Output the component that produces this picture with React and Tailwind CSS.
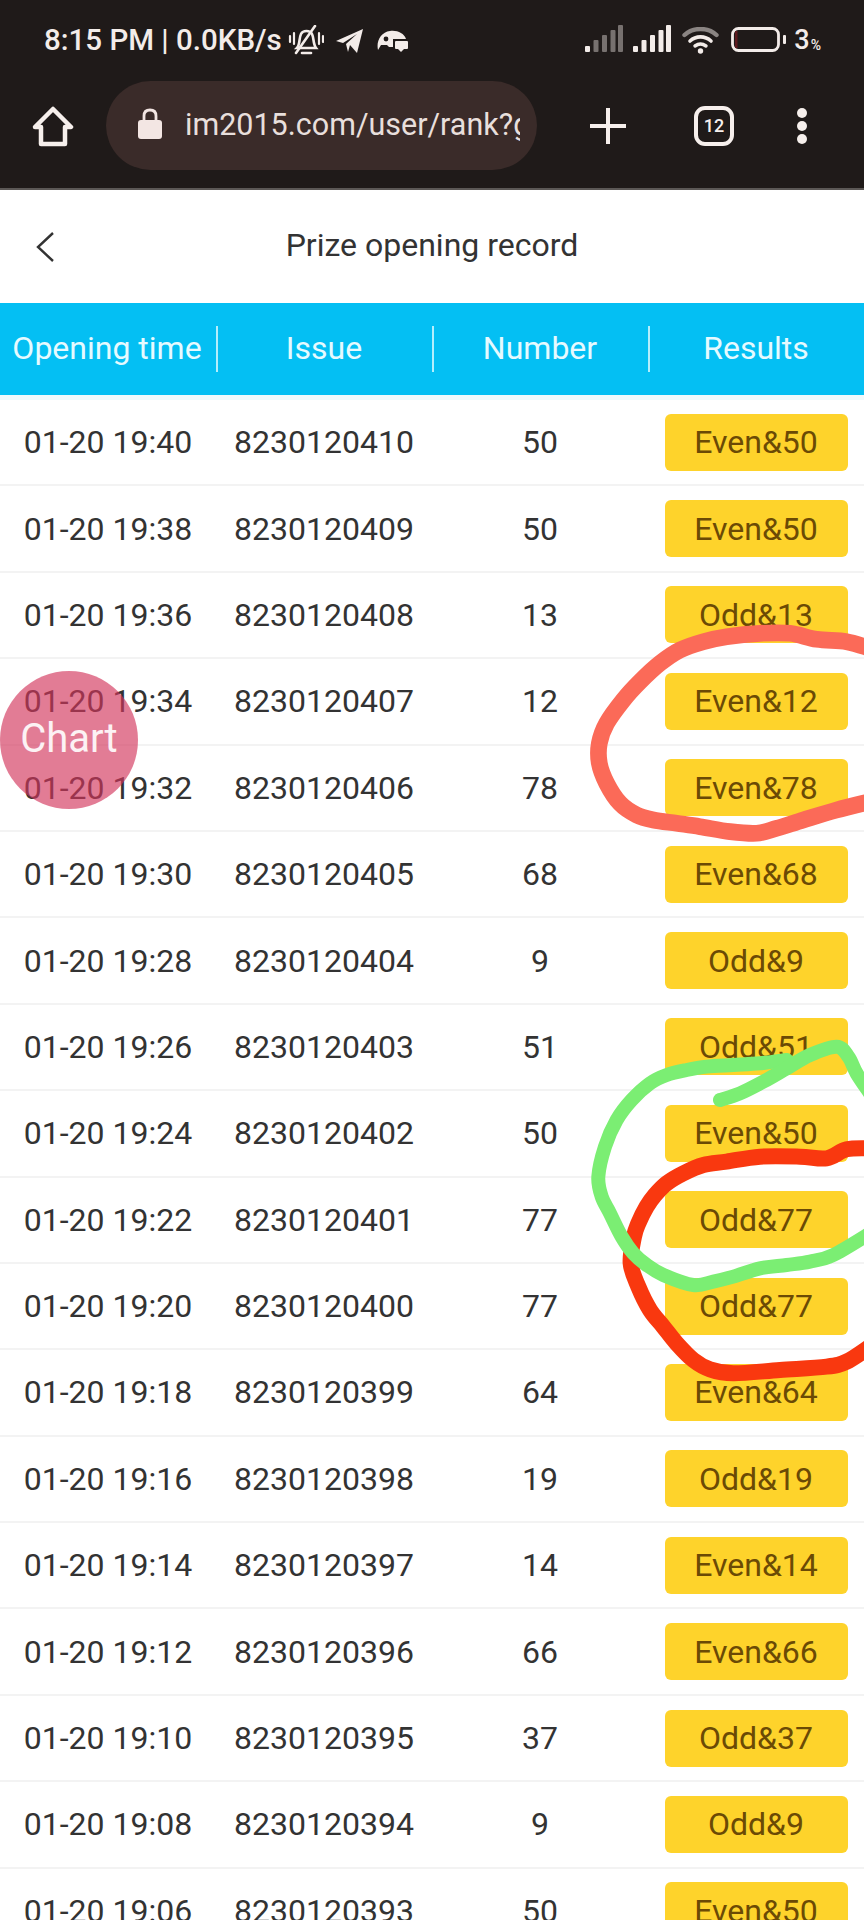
const rows = [
  ["19:40", "410", "50"], ["19:38", "409", "50"], ["19:36", "408", "13"], ["19:34", "407", "12"],
  ["19:32", "406", "78"], ["19:30", "405", "68"], ["19:28", "404", "9"], ["19:26", "403", "51"],
  ["19:24", "402", "50"], ["19:22", "401", "77"], ["19:20", "400", "77"], ["19:18", "399", "64"],
  ["19:16", "398", "19"], ["19:14", "397", "14"], ["19:12", "396", "66"], ["19:10", "395", "37"],
  ["19:08", "394", "9"], ["19:06", "393", "50"],
];

function smooth(p) {
  let d = `M${p[0][0]} ${p[0][1]}`;
  for (let i = 0; i < p.length - 1; i++) {
    const a = p[Math.max(i - 1, 0)], b = p[i], c = p[i + 1], e = p[Math.min(i + 2, p.length - 1)];
    d += ` C${b[0] + (c[0] - a[0]) / 6} ${b[1] + (c[1] - a[1]) / 6} ${c[0] - (e[0] - b[0]) / 6} ${c[1] - (e[1] - b[1]) / 6} ${c[0]} ${c[1]}`;
  }
  return d;
}

const coral = [[930,145],[860,125],[770,118],[690,100],[600,100],[500,110],[430,125],[360,150],[300,190],[240,245],[190,300],[140,370],[118,430],[118,490],[140,550],[180,610],[230,645],[280,660],[350,670],[420,680],[510,695],[590,700],[650,685],[730,660],[830,630],[930,605]];
const greenHook = [[480,270],[540,250],[610,215],[680,175],[750,135],[830,110],[865,140],[890,190],[930,250]];
const greenLoop = [[680,150],[600,160],[520,165],[440,170],[380,180],[320,195],[270,220],[215,270],[170,330],[135,410],[115,500],[125,560],[150,610],[185,680],[220,730],[260,765],[310,795],[400,825],[460,815],[520,800],[600,775],[680,765],[750,755],[820,735],[930,670]];
const redLoop = [[930,415],[860,418],[800,445],[720,440],[600,440],[500,455],[430,465],[370,490],[320,520],[285,555],[260,590],[235,640],[222,680],[212,760],[235,830],[270,900],[310,950],[350,1000],[400,1050],[450,1078],[520,1090],[660,1080],[800,1070],[860,1055],[930,1010]];

function Scribbles() {
  return (
    <svg className="absolute left-0 top-0 pointer-events-none" width="864" height="1920" viewBox="0 0 864 1920" fill="none" strokeLinecap="round" strokeLinejoin="round">
      <g transform="translate(560 600) scale(0.3333)">
        <path d={smooth(coral)} stroke="#fb6a58" strokeWidth="50" />
      </g>
      <g transform="translate(560 1010) scale(0.3333)">
        <path d={smooth(redLoop)} stroke="#f9380f" strokeWidth="48" />
        <path d={smooth(greenLoop)} stroke="#7bee73" strokeWidth="42" />
        <path d={smooth(greenHook)} stroke="#7bee73" strokeWidth="42" />
      </g>
    </svg>
  );
}

function Signal({ color }) {
  const bars = [[0, 21, 6], [8.5, 15, 12], [17, 10, 17], [25.5, 5, 22], [33, 0, 27]];
  return (
    <svg width="38" height="27" viewBox="0 0 38 27" className="block">
      {bars.map(([x, y, h], i) => (
        <rect key={x} x={x} y={y} width="5" height={h} rx="1" fill={i === 0 ? "#f3ece9" : color} />
      ))}
    </svg>
  );
}

function StatusBar() {
  return (
    <div className="h-[66px] pt-[23px] flex items-start text-[#f3ece9] text-[29.5px] leading-[34px] font-medium">
      <span className="ml-[44px] w-[244px] whitespace-nowrap">8:15 PM | 0.0KB/s</span>
      <svg width="36" height="31" viewBox="0 0 36 31" fill="none" stroke="#f3ece9" strokeWidth="2.6" strokeLinecap="round" className="mt-[2px]">
        <path d="M9 23 C12 20 11 13 13 9 C15 5 22 5 24 9 C26 13 25 19 28 23 Z" />
        <path d="M14 28 H23" />
        <path d="M8 28 L27 1" />
        <path d="M2 11 V17 M6 8 V19 M31 8 V19 M35 11 V17" strokeWidth="2.2" />
      </svg>
      <svg width="27" height="25" viewBox="0 0 27 25" className="ml-[12px] mt-[5px]" fill="#f3ece9">
        <path d="M0 13 L27 1 L21 25 L14 17 L12 24 L10 16 L21 6 L7 15 Z" />
      </svg>
      <svg width="32" height="23" viewBox="0 0 32 23" className="ml-[14px] mt-[7px]" fill="#f3ece9">
        <path d="M1 20 C-1 11 4 2 13 1 C20 0 27 3 29 9 H16 V17 H12 L10 15 H4 Z" />
        <circle cx="9" cy="9" r="2.4" fill="#1f1a19" />
        <rect x="18" y="11" width="13" height="8" rx="1" />
        <path d="M21 19 H27 L24 22 Z" />
      </svg>
      <div className="ml-auto mr-[43px] flex items-start">
        <div className="mt-[2px]"><Signal color="#77716f" /></div>
        <div className="ml-[10px] mt-[2px]"><Signal color="#f3ece9" /></div>
        <svg width="37" height="27" viewBox="0 0 37 27" fill="none" className="ml-[11px] mt-[4px]" strokeLinecap="round">
          <path d="M2.5 8 C11 0 26 0 34.5 8" stroke="#8a8482" strokeWidth="4.4" />
          <path d="M8 14 C14 8.5 23 8.5 29 14" stroke="#f3ece9" strokeWidth="3.6" />
          <path d="M13 19 C16.5 16.5 20.5 16.5 24 19" stroke="#f3ece9" strokeWidth="3.4" />
          <circle cx="18.5" cy="24" r="2.7" fill="#f3ece9" />
        </svg>
        <svg width="56" height="25" viewBox="0 0 56 25" fill="none" className="ml-[12px] mt-[4px]">
          <rect x="1.5" y="1.5" width="46" height="22" rx="6" stroke="#f3ece9" strokeWidth="2.8" />
          <rect x="4" y="4" width="2.5" height="17" fill="#5e1a1e" />
          <rect x="52" y="8" width="3" height="9" rx="1" fill="#f3ece9" />
        </svg>
        <span className="ml-[7px] text-[27px] leading-[34px]">3</span>
        <span className="ml-[1px] text-[14px] leading-[14px] mt-[15px]">%</span>
      </div>
    </div>
  );
}

function BrowserBar() {
  return (
    <div className="h-[124px] flex items-start border-b-2 border-[#5c5856]">
      <svg width="42" height="42" viewBox="0 0 42 42" fill="none" stroke="#f6efec" strokeWidth="4.5" strokeLinejoin="round" className="ml-[32px] mt-[40px]">
        <path d="M21 3 L39 21 H33 V38 H9 V21 H3 Z" />
      </svg>
      <div className="ml-[32px] mt-[15px] w-[431px] h-[89px] rounded-[45px] bg-[#3a2b29] flex items-center overflow-hidden">
        <svg width="24" height="32" viewBox="0 0 24 32" className="ml-[32px] shrink-0 -mt-[3px]">
          <path d="M6 13 V8 C6 4 8.5 2 12 2 C15.5 2 18 4 18 8 V13" fill="none" stroke="#f3e6e3" strokeWidth="2.8" />
          <rect x="0" y="12" width="24" height="19" rx="3" fill="#f3e6e3" />
        </svg>
        <div className="ml-[23px] w-[335px] overflow-hidden whitespace-nowrap text-[30.5px] text-[#e8dfdc] -mt-[2px]">im2015.com/user/rank?game=1</div>
      </div>
      <svg width="38" height="38" viewBox="0 0 38 38" stroke="#f6efec" strokeWidth="4" className="ml-[52px] mt-[41px]">
        <path d="M19 1 V37 M1 19 H37" />
      </svg>
      <div className="ml-[67px] mt-[40px] w-[40px] h-[40px] rounded-[11px] border-[4px] border-[#f6efec] flex items-center justify-center text-[#f6efec] text-[18px] font-medium leading-none">12</div>
      <div className="ml-[63px] mt-[42px] flex flex-col gap-[3px]">
        <div className="w-[10px] h-[10px] rounded-full bg-[#f6efec]" />
        <div className="w-[10px] h-[10px] rounded-full bg-[#f6efec]" />
        <div className="w-[10px] h-[10px] rounded-full bg-[#f6efec]" />
      </div>
    </div>
  );
}

export default function App() {
  return (
    <div className="relative w-[864px] h-[1920px] overflow-hidden bg-white" style={{ fontFamily: "Roboto, sans-serif" }}>
      <div className="bg-[#1f1a19]">
        <StatusBar />
        <BrowserBar />
      </div>
      <div className="h-[113px] relative flex items-center justify-center text-[32px] text-[#333333]">
        <svg width="20" height="30" viewBox="0 0 20 30" fill="none" stroke="#333333" strokeWidth="2.4" className="absolute left-[35px] top-[42px]">
          <path d="M18 1 L3 15 L18 29" />
        </svg>
        <span className="-mt-[4px]">Prize opening record</span>
      </div>
      <div className="h-[92px] bg-[#04bff3] grid grid-cols-[218px_216px_216px_214px] items-center text-[32px] text-[#e6faff] text-center">
        {["Opening time", "Issue", "Number", "Results"].map((t, i) => (
          <div key={t} className={i < 3 ? "h-[46px] pb-[2px] pr-[2px] flex items-center justify-center border-r-2 border-[#b4eefc] whitespace-nowrap" : "h-[46px] pb-[2px] pr-[2px] flex items-center justify-center"}>
            {t}
          </div>
        ))}
      </div>
      <div className="h-[5px] bg-[#f0fafc]" />
      <div>
        {rows.map(([time, issue, num]) => (
          <div key={issue} className="h-[86.4px] grid grid-cols-4 items-center text-center text-[32px] text-[#333333] border-b-2 border-[#f3f3f3]">
            <div>01-20 {time}</div>
            <div>8230120{issue}</div>
            <div>{num}</div>
            <div className="w-[183px] h-[57px] mx-auto rounded-[6px] bg-[#fed32b] text-[#6b4a05] flex items-center justify-center">
              {Number(num) % 2 === 0 ? "Even" : "Odd"}&amp;{num}
            </div>
          </div>
        ))}
      </div>
      <div className="absolute left-0 top-[671px] w-[138px] h-[138px] rounded-full bg-[#d2355c]/65 flex items-center justify-center text-white/90 text-[40px]">
        <span className="-mt-[2px]">Chart</span>
      </div>
      <Scribbles />
    </div>
  );
}
